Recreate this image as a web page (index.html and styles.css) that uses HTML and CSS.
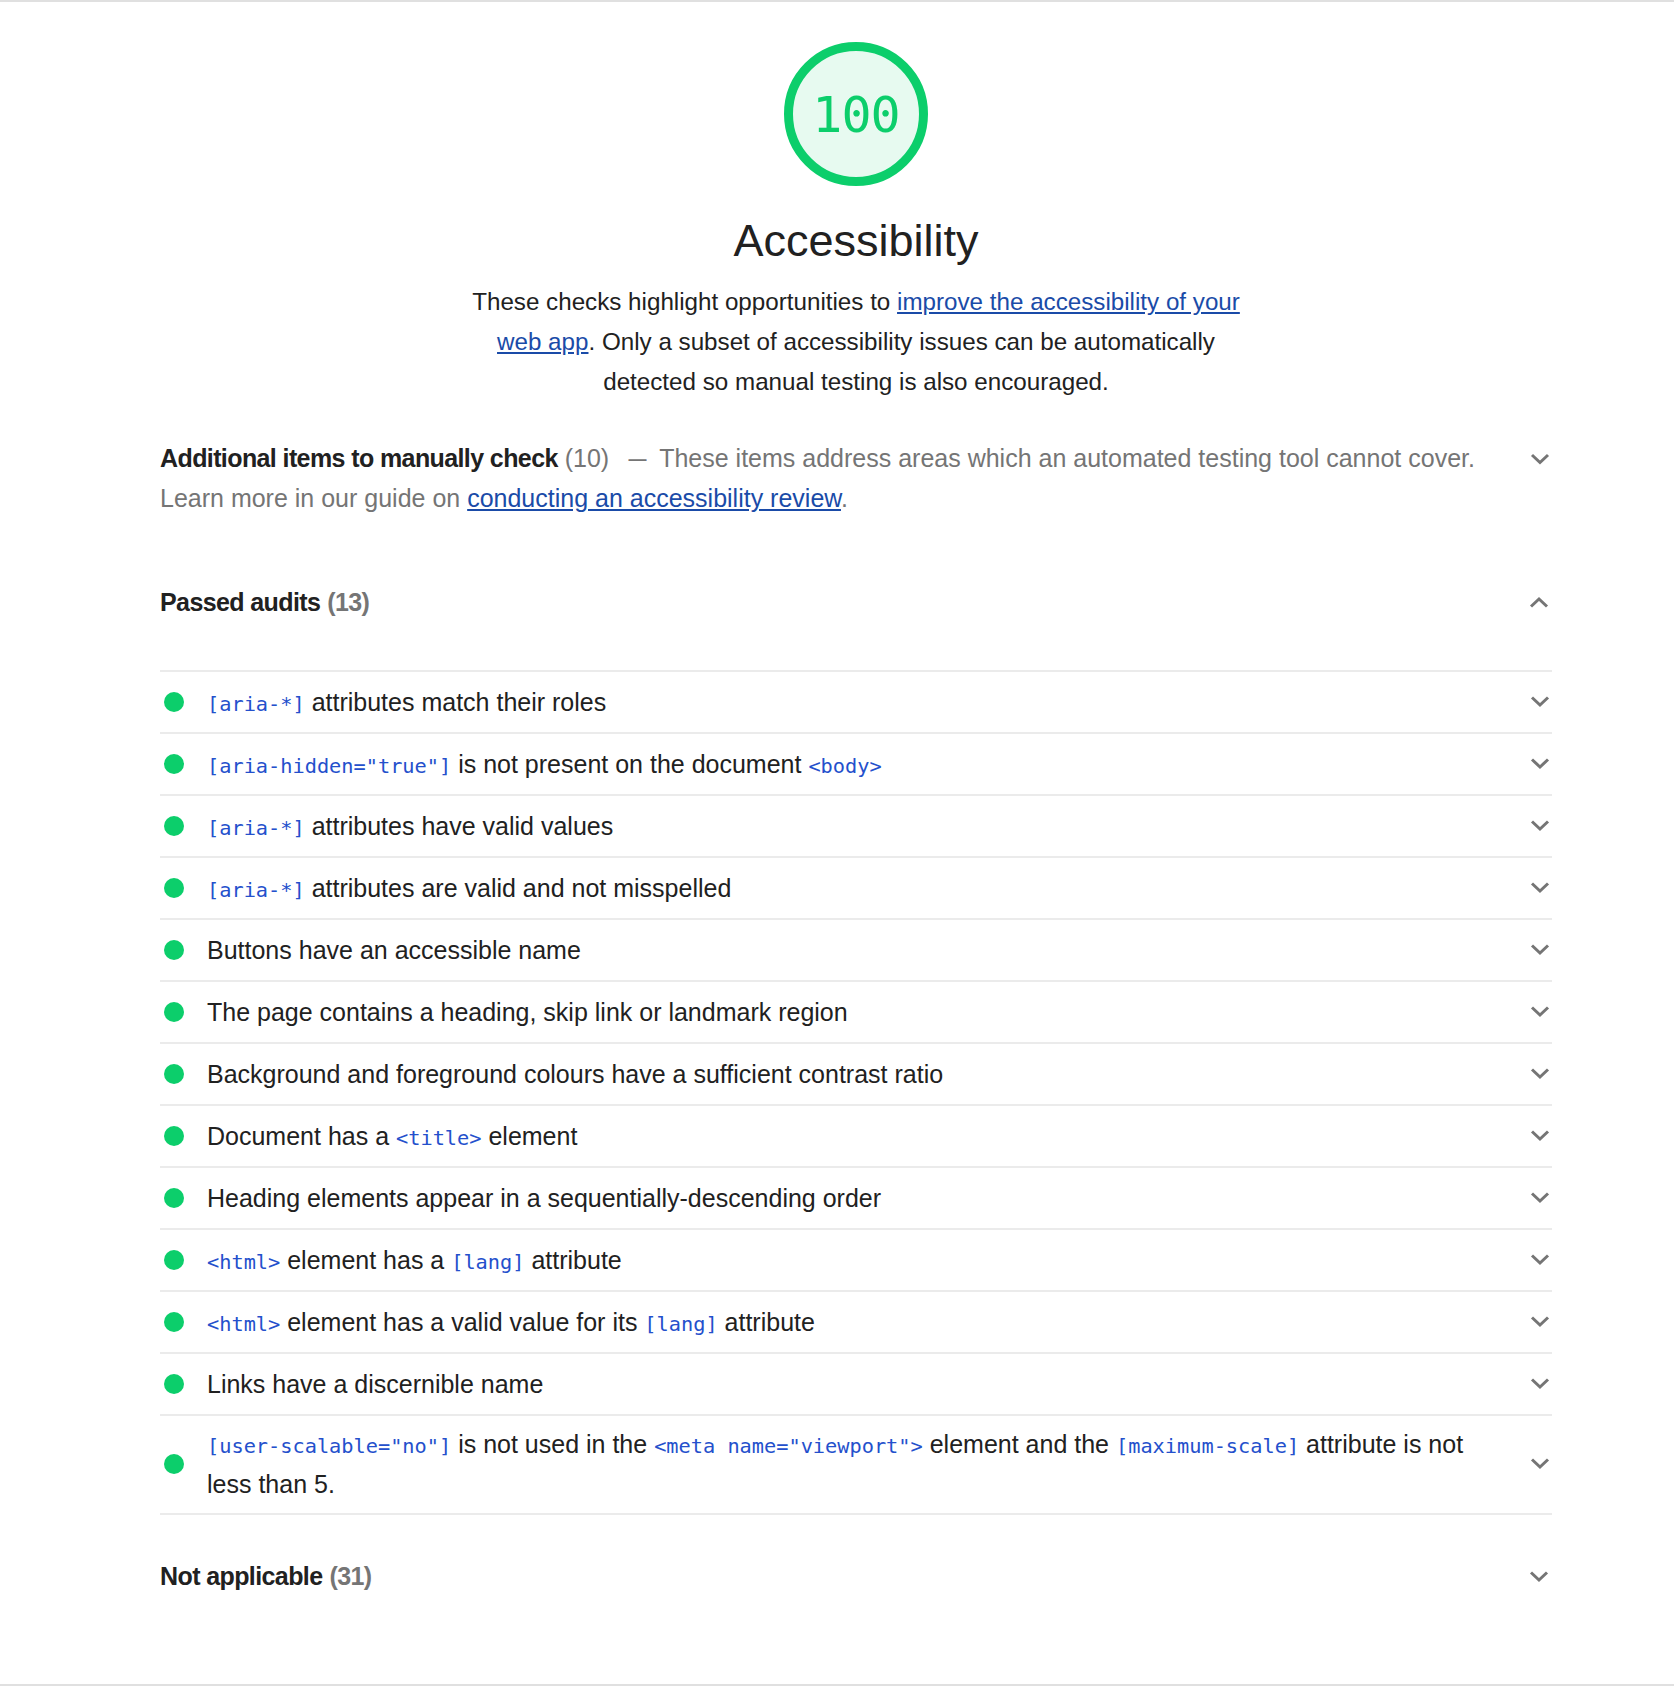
FILE: index.html
```html
<!DOCTYPE html>
<html lang="en">
<head>
<meta charset="utf-8">
<title>Accessibility</title>
<link rel="stylesheet" href="styles.css">
</head>
<body>
<div class="page">
  <div class="category">
    <div class="cat-header">
      <div class="gauge"><span class="gauge-num">100</span></div>
      <h1 class="cat-title">Accessibility</h1>
      <p class="cat-desc">These checks highlight opportunities to <a href="#">improve the accessibility of your web app</a>. Only a subset of accessibility issues can be automatically detected so manual testing is also encouraged.</p>
    </div>

    <div class="group-header group-manual">
      <div class="group-text"><span class="group-title">Additional items to manually check</span> <span class="group-count-light">(10)</span><span class="dash">—</span><span class="group-desc">These items address areas which an automated testing tool cannot cover. Learn more in our guide on <a href="#">conducting an accessibility review</a>.</span></div>
      <svg class="chev" width="24" height="40" viewBox="0 0 24 40"><polyline points="4,17 12,24.5 20,17"/></svg>
    </div>

    <div class="group-header group-passed">
      <div class="group-text"><span class="group-title">Passed audits</span> <span class="group-count">(13)</span></div>
      <svg class="chev" width="24" height="40" viewBox="0 0 24 40"><polyline points="3,24.5 11,17 19,24.5"/></svg>
    </div>

    <ul class="audits">
      <li class="audit"><span class="dot"></span><span class="audit-title"><code>[aria-*]</code> attributes match their roles</span><svg class="chev" width="24" height="40" viewBox="0 0 24 40"><polyline points="4,15.5 12,23 20,15.5"/></svg></li>
      <li class="audit"><span class="dot"></span><span class="audit-title"><code>[aria-hidden="true"]</code> is not present on the document <code>&lt;body&gt;</code></span><svg class="chev" width="24" height="40" viewBox="0 0 24 40"><polyline points="4,15.5 12,23 20,15.5"/></svg></li>
      <li class="audit"><span class="dot"></span><span class="audit-title"><code>[aria-*]</code> attributes have valid values</span><svg class="chev" width="24" height="40" viewBox="0 0 24 40"><polyline points="4,15.5 12,23 20,15.5"/></svg></li>
      <li class="audit"><span class="dot"></span><span class="audit-title"><code>[aria-*]</code> attributes are valid and not misspelled</span><svg class="chev" width="24" height="40" viewBox="0 0 24 40"><polyline points="4,15.5 12,23 20,15.5"/></svg></li>
      <li class="audit"><span class="dot"></span><span class="audit-title">Buttons have an accessible name</span><svg class="chev" width="24" height="40" viewBox="0 0 24 40"><polyline points="4,15.5 12,23 20,15.5"/></svg></li>
      <li class="audit"><span class="dot"></span><span class="audit-title">The page contains a heading, skip link or landmark region</span><svg class="chev" width="24" height="40" viewBox="0 0 24 40"><polyline points="4,15.5 12,23 20,15.5"/></svg></li>
      <li class="audit"><span class="dot"></span><span class="audit-title">Background and foreground colours have a sufficient contrast ratio</span><svg class="chev" width="24" height="40" viewBox="0 0 24 40"><polyline points="4,15.5 12,23 20,15.5"/></svg></li>
      <li class="audit"><span class="dot"></span><span class="audit-title">Document has a <code>&lt;title&gt;</code> element</span><svg class="chev" width="24" height="40" viewBox="0 0 24 40"><polyline points="4,15.5 12,23 20,15.5"/></svg></li>
      <li class="audit"><span class="dot"></span><span class="audit-title">Heading elements appear in a sequentially-descending order</span><svg class="chev" width="24" height="40" viewBox="0 0 24 40"><polyline points="4,15.5 12,23 20,15.5"/></svg></li>
      <li class="audit"><span class="dot"></span><span class="audit-title"><code>&lt;html&gt;</code> element has a <code>[lang]</code> attribute</span><svg class="chev" width="24" height="40" viewBox="0 0 24 40"><polyline points="4,15.5 12,23 20,15.5"/></svg></li>
      <li class="audit"><span class="dot"></span><span class="audit-title"><code>&lt;html&gt;</code> element has a valid value for its <code>[lang]</code> attribute</span><svg class="chev" width="24" height="40" viewBox="0 0 24 40"><polyline points="4,15.5 12,23 20,15.5"/></svg></li>
      <li class="audit"><span class="dot"></span><span class="audit-title">Links have a discernible name</span><svg class="chev" width="24" height="40" viewBox="0 0 24 40"><polyline points="4,15.5 12,23 20,15.5"/></svg></li>
      <li class="audit audit-multi"><span class="dot"></span><span class="audit-title"><code>[user-scalable="no"]</code> is not used in the <code>&lt;meta name="viewport"&gt;</code> element and the <code>[maximum-scale]</code> attribute is not less than 5.</span><svg class="chev" width="24" height="40" viewBox="0 0 24 40"><polyline points="4,15.5 12,23 20,15.5"/></svg></li>
    </ul>

    <div class="group-header group-na">
      <div class="group-text"><span class="group-title">Not applicable</span> <span class="group-count">(31)</span></div>
      <svg class="chev" width="24" height="40" viewBox="0 0 24 40"><polyline points="3,16.5 11,24 19,16.5"/></svg>
    </div>
  </div>
</div>
</body>
</html>
```

FILE: styles.css
```css
* {
  box-sizing: border-box;
}

html, body {
  margin: 0;
  padding: 0;
  background: #ffffff;
}

body {
  font-family: "Liberation Sans", Arial, Helvetica, sans-serif;
  color: #212121;
}

.page {
  border-top: 2px solid #e0e0e0;
  border-bottom: 2px solid #e0e0e0;
  padding-top: 40px;
  padding-bottom: 88px;
}

.category {
  margin-left: 160px;
  width: 1392px;
}

.cat-header {
  display: flex;
  flex-direction: column;
  align-items: center;
}

.gauge {
  width: 144px;
  height: 144px;
  border-radius: 50%;
  border: 9px solid #0cce6b;
  background: #e7faf0;
  display: flex;
  align-items: center;
  justify-content: center;
}

.gauge-num {
  font-family: "DejaVu Sans Mono", "Liberation Mono", monospace;
  font-size: 50px;
  line-height: 50px;
  color: #0cce6b;
  letter-spacing: -1px;
  padding-top: 1px;
  font-variant-numeric: slashed-zero;
}

.cat-title {
  margin: 27px 0 0;
  font-size: 45px;
  line-height: 56px;
  font-weight: normal;
  color: #212121;
}

.cat-desc {
  margin: 13px 0 0;
  width: 800px;
  text-align: center;
  font-size: 24.2px;
  line-height: 40px;
  color: #212121;
}

a {
  color: #1a4ba8;
  text-decoration: underline;
}

.group-header {
  display: flex;
  align-items: flex-start;
  gap: 36px;
  font-size: 25px;
  line-height: 40px;
}

.group-text {
  flex: 1;
}

.group-manual {
  margin-top: 36px;
}

.group-passed {
  margin-top: 63.5px;
}

.group-na {
  margin-top: 41.5px;
}

.group-title {
  font-weight: bold;
  color: #212121;
  letter-spacing: -0.6px;
}

.group-count {
  font-weight: bold;
  color: #757575;
  letter-spacing: -0.6px;
}

.group-count-light {
  color: #757575;
}

.dash {
  display: inline-block;
  color: #757575;
  line-height: 1;
  transform: scaleX(0.72);
  margin: 0 9.5px 0 15.5px;
}

.group-desc {
  color: #757575;
}

.chev {
  flex: none;
  display: block;
}

.chev polyline {
  fill: none;
  stroke: #757575;
  stroke-width: 3;
  stroke-linecap: butt;
  stroke-linejoin: miter;
}

.audits {
  list-style: none;
  margin: 48px 0 0;
  padding: 0;
  border-top: 2px solid #ebebeb;
}

.audit {
  display: flex;
  align-items: center;
  padding: 10px 0;
  border-bottom: 2px solid #ebebeb;
}

.audit-multi {
  padding: 8.5px 0;
}

.dot {
  flex: none;
  width: 20px;
  height: 20px;
  border-radius: 50%;
  background: #0cce6b;
  margin-left: 4px;
  margin-right: 23px;
}

.audit-title {
  flex: 1;
  font-size: 25px;
  line-height: 40px;
  color: #212121;
  margin-right: 40px;
}

code {
  font-family: "DejaVu Sans Mono", "Liberation Mono", monospace;
  font-size: 20.3px;
  line-height: 1;
  color: #2450cc;
}
```
